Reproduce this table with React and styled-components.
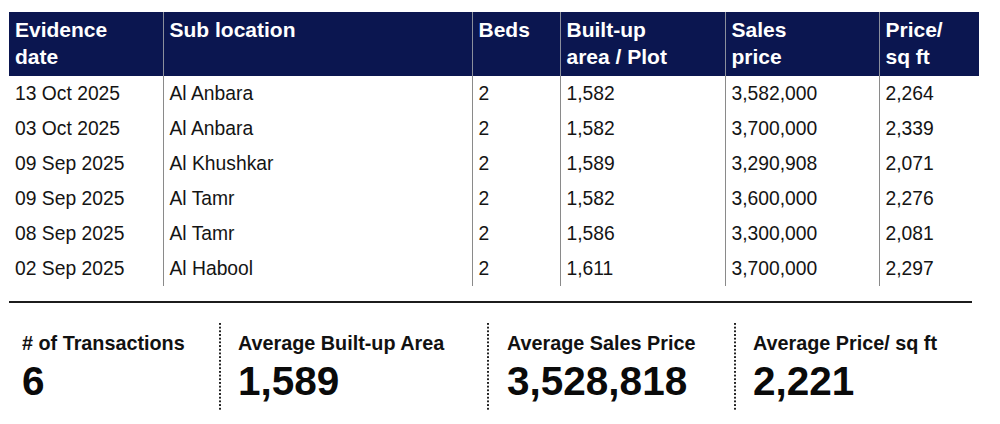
import React from 'react';
import styled, { createGlobalStyle } from 'styled-components';

const GlobalStyle = createGlobalStyle`
  body {
    margin: 0;
    background: #ffffff;
    font-family: "Liberation Sans", Arial, sans-serif;
    color: #111111;
  }
`;

const Page = styled.div`
  width: 1000px;
  height: 424px;
  padding: 12px 0 0 9px;
  box-sizing: border-box;
  overflow: hidden;
`;

const Table = styled.table`
  width: 970px;
  border-collapse: collapse;
  table-layout: fixed;
`;

const HeadRow = styled.tr`
  background: #0b1650;
  height: 64px;
`;

const HeadCell = styled.th`
  width: ${({ $w }) => $w}px;
  text-align: left;
  vertical-align: top;
  padding: 4px 6px 6px 6px;
  font-size: 21px;
  line-height: 27px;
  font-weight: 700;
  color: #ffffff;
  border-left: ${({ $first }) => ($first ? 'none' : '1px solid #8b8f9c')};
  box-sizing: border-box;
`;

const Row = styled.tr`
  height: 35px;
`;

const Cell = styled.td`
  padding: 0 6px;
  font-size: 19.3px;
  line-height: 35px;
  color: #141414;
  white-space: nowrap;
  border-left: ${({ $first }) => ($first ? 'none' : '1px solid #8a8a8a')};
`;

const Rule = styled.hr`
  width: 963px;
  margin: 15px 0 0 0;
  border: none;
  border-top: 2px solid #1c1c1c;
`;

const Stats = styled.div`
  display: flex;
  margin-top: 20px;
`;

const Stat = styled.div`
  width: ${({ $w }) => $w}px;
  padding: 8px 0 8px ${({ $pad }) => $pad}px;
  box-sizing: border-box;
  background-image: ${({ $dotted }) =>
    $dotted ? 'linear-gradient(to bottom, #222 1.5px, transparent 1.5px)' : 'none'};
  background-size: 1.5px 3.7px;
  background-repeat: repeat-y;
  background-position: left top;
`;

const StatLabel = styled.div`
  font-size: 19.8px;
  line-height: 24px;
  font-weight: 700;
  color: #111111;
  white-space: nowrap;
`;

const StatValue = styled.div`
  margin-top: 4px;
  font-size: 40.5px;
  line-height: 44px;
  font-weight: 700;
  color: #0a0a0a;
`;

const columns = [
  { label: ['Evidence', 'date'], w: 154 },
  { label: ['Sub location'], w: 309 },
  { label: ['Beds'], w: 88 },
  { label: ['Built-up', 'area / Plot'], w: 165 },
  { label: ['Sales', 'price'], w: 154 },
  { label: ['Price/', 'sq ft'], w: 100 },
];

const rows = [
  ['13 Oct 2025', 'Al Anbara', '2', '1,582', '3,582,000', '2,264'],
  ['03 Oct 2025', 'Al Anbara', '2', '1,582', '3,700,000', '2,339'],
  ['09 Sep 2025', 'Al Khushkar', '2', '1,589', '3,290,908', '2,071'],
  ['09 Sep 2025', 'Al Tamr', '2', '1,582', '3,600,000', '2,276'],
  ['08 Sep 2025', 'Al Tamr', '2', '1,586', '3,300,000', '2,081'],
  ['02 Sep 2025', 'Al Habool', '2', '1,611', '3,700,000', '2,297'],
];

const stats = [
  { label: '# of Transactions', value: '6', w: 210, pad: 13 },
  { label: 'Average Built-up Area', value: '1,589', w: 268, pad: 19 },
  { label: 'Average Sales Price', value: '3,528,818', w: 247, pad: 20 },
  { label: 'Average Price/ sq ft', value: '2,221', w: 240, pad: 19 },
];

export default function App() {
  return (
    <Page>
      <GlobalStyle />
      <Table>
        <thead>
          <HeadRow>
            {columns.map((col, i) => (
              <HeadCell key={i} $w={col.w} $first={i === 0}>
                {col.label.map((line, j) => (
                  <div key={j}>{line}</div>
                ))}
              </HeadCell>
            ))}
          </HeadRow>
        </thead>
        <tbody>
          {rows.map((row, i) => (
            <Row key={i}>
              {row.map((value, j) => (
                <Cell key={j} $first={j === 0}>
                  {value}
                </Cell>
              ))}
            </Row>
          ))}
        </tbody>
      </Table>

      <Rule />

      <Stats>
        {stats.map((stat, i) => (
          <Stat key={stat.label} $w={stat.w} $pad={stat.pad} $dotted={i > 0}>
            <StatLabel>{stat.label}</StatLabel>
            <StatValue>{stat.value}</StatValue>
          </Stat>
        ))}
      </Stats>
    </Page>
  );
}
